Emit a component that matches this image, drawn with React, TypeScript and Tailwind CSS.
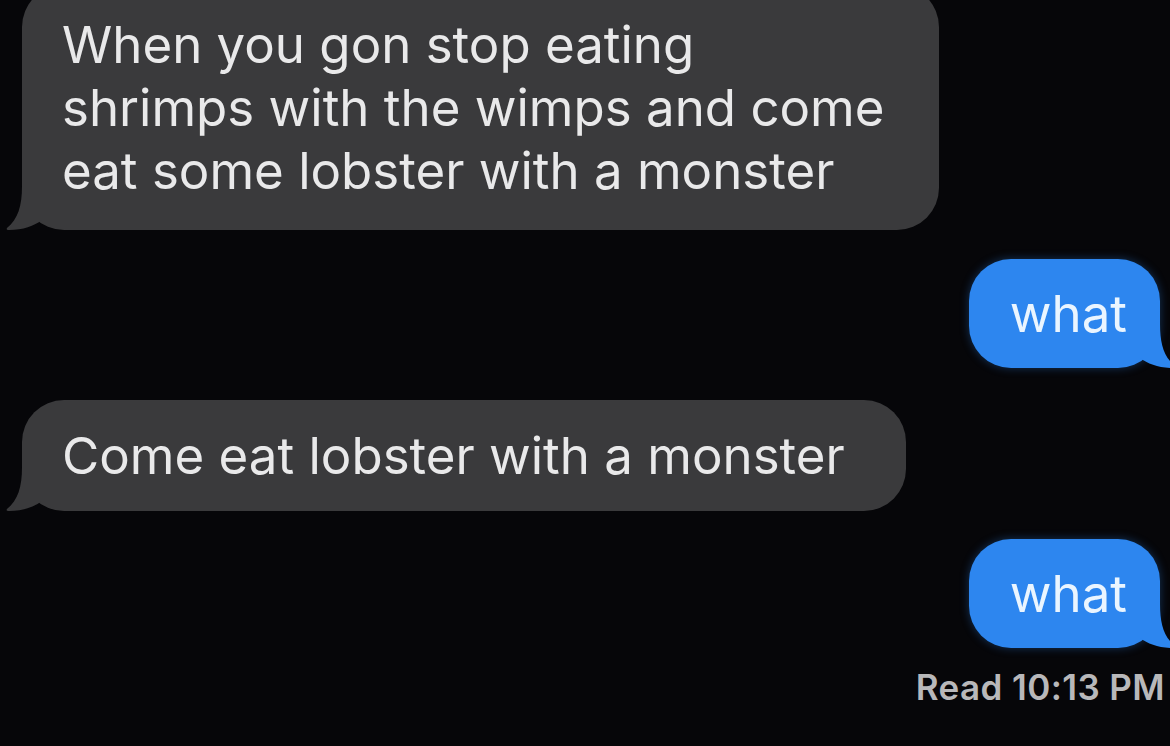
const font = { fontFamily: "Inter, 'Noto Sans', sans-serif" }

const IncomingTail = () => (
  <svg
    className="absolute -left-[18px] bottom-0"
    width="50"
    height="44"
    viewBox="0 0 50 44"
  >
    <path
      d="M18 0 C18 20 14 33 3 42 C2 43.5 3 44 5 44 C19 44 30 40 38 34 L50 34 L50 0 Z"
      fill="#3a3a3c"
    />
  </svg>
)

const OutgoingTail = () => (
  <svg
    className="absolute -right-[18px] bottom-0"
    width="50"
    height="44"
    viewBox="0 0 50 44"
  >
    <path
      d="M32 0 C32 20 36 33 47 42 C48 43.5 47 44 45 44 C31 44 20 40 12 34 L0 34 L0 0 Z"
      fill="#2d86ef"
    />
  </svg>
)

const Incoming = ({ lines, className }: { lines: string[]; className?: string }) => (
  <div className={`relative self-start ml-[22px] rounded-[42px] bg-[#3a3a3c] pl-[40px] text-[51px] leading-[63px] text-[#e9e9ea] ${className ?? ""}`}>
    {lines.map((l) => (
      <div key={l}>{l}</div>
    ))}
    <IncomingTail />
  </div>
)

const Outgoing = ({ text, className }: { text: string; className?: string }) => (
  <div className={`relative self-end mr-[10px] rounded-[42px] bg-[#2d86ef] pl-[41px] pr-[33px] py-[23px] text-[51px] leading-[63px] text-[#eaf5ff] shadow-[0_0_10px_rgba(45,134,239,0.35)] ${className ?? ""}`}>
    {text}
    <OutgoingTail />
  </div>
)

export default function App() {
  return (
    <div className="w-[1170px] h-[746px] overflow-hidden bg-[#060609] flex flex-col" style={font}>
      <Incoming
        className="-mt-[15px] pt-[28px] pb-[28px] pr-[54px]"
        lines={[
          "When you gon stop eating",
          "shrimps with the wimps and come",
          "eat some lobster with a monster",
        ]}
      />
      <Outgoing text="what" className="mt-[29px]" />
      <Incoming className="mt-[32px] py-[24px] pr-[61px]" lines={["Come eat lobster with a monster"]} />
      <Outgoing text="what" className="mt-[28px]" />
      <div className="self-end mr-[5px] mt-[18px] text-[35px] leading-[42px] font-semibold tracking-[0.4px] text-[#b8b8ba]">
        Read 10:13 PM
      </div>
    </div>
  )
}
